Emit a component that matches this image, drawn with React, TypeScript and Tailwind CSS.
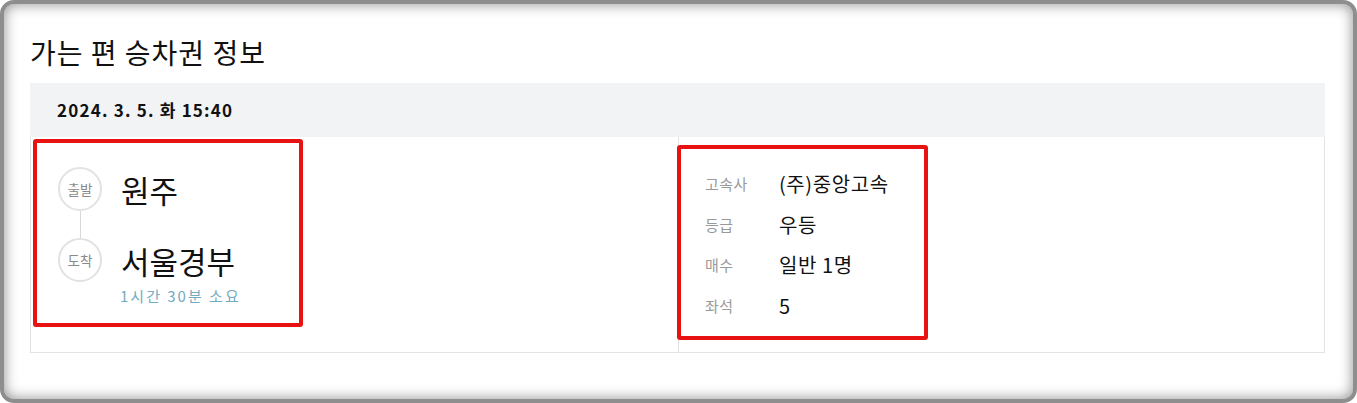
import React from 'react';

const font = { fontFamily: '"Noto Sans CJK KR", "Noto Sans", sans-serif' };

const App = () => {
  const details = [
    { label: "고속사", value: "(주)중앙고속" },
    { label: "등급", value: "우등" },
    { label: "매수", value: "일반 1명" },
    { label: "좌석", value: "5" }
  ];

  return (
    <div className="w-[1357px] h-[403px] bg-white" style={font}>
      <div className="h-full rounded-[14px] border-[4px] border-[#8e8e8e] shadow-[inset_0_0_14px_rgba(0,0,0,0.45)] pl-[26px] pr-[28px] pt-[30px]">
        <h1 className="h-[36px] leading-[36px] text-[28px] tracking-[1px] text-[#111] mb-[13px]">가는 편 승차권 정보</h1>

        <div className="h-[54px] flex items-center pl-[27px] bg-[#f2f3f5] text-[17px] tracking-[1.2px] font-bold text-[#111]">
          2024. 3. 5. 화 15:40
        </div>

        <div className="grid grid-cols-[647px_1fr] h-[216px] border border-t-0 border-[#e3e3e3]">
          <div className="pt-[2px] pl-[2px]">
            <div className="w-[270px] h-[188px] border-[4px] border-[#e81212] rounded-[3px] pl-[21px] pt-[24px]">
              <div className="flex items-center">
                <div className="w-[44px] h-[44px] rounded-full border-2 border-[#e2e2e2] flex items-center justify-center text-[13.5px] text-[#8a8a8a]">출발</div>
                <span className="ml-[19px] text-[31px] text-[#111] leading-none">원주</span>
              </div>
              <div className="w-px h-[27px] bg-[#d8d8d8] ml-[21.5px]"></div>
              <div className="flex items-center">
                <div className="w-[44px] h-[44px] rounded-full border-2 border-[#e2e2e2] flex items-center justify-center text-[13.5px] text-[#8a8a8a]">도착</div>
                <span className="ml-[19px] text-[31px] text-[#111] leading-none">서울경부</span>
              </div>
              <div className="ml-[62px] mt-[4px] text-[15px] tracking-[2px] leading-[20px] text-[#74abc2]">1시간 30분 소요</div>
            </div>
          </div>

          <div className="border-l border-[#e3e3e3] pt-[8px]">
            <div className="w-[251px] h-[195px] -ml-[2px] border-[4px] border-[#e81212] rounded-[3px] pl-[24px] pt-[15px]">
              {details.map((item, index) => (
                <div key={index} className="flex items-center h-[40.5px]">
                  <span className="w-[74px] text-[15px] tracking-[0.4px] text-[#9a9a9a]">{item.label}</span>
                  <span className="text-[20px] tracking-[0.6px] text-[#111]">{item.value}</span>
                </div>
              ))}
            </div>
          </div>
        </div>
      </div>
    </div>
  );
};

export default App;
